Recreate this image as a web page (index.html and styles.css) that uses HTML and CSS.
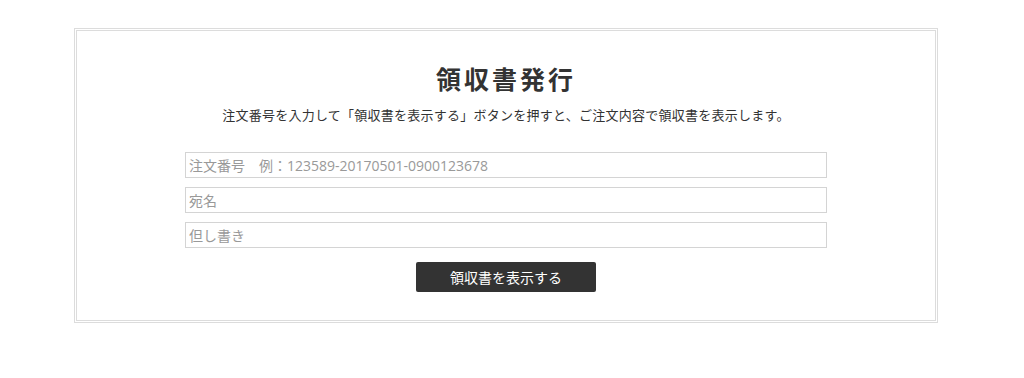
FILE: index.html
```html
<!DOCTYPE html>
<html lang="ja">
<head>
    <meta charset="UTF-8">
    <meta name="viewport" content="width=device-width, initial-scale=1.0">
    <title>領収書発行</title>
    <link rel="stylesheet" href="styles.css">
</head>
<body>
    <section class="receipt">
        <h1 class="receipt-title">領収書発行</h1>
        <p class="receipt-lead">注文番号を入力して「領収書を表示する」ボタンを押すと、ご注文内容で領収書を表示します。</p>
        <form class="receipt-form" onsubmit="event.preventDefault()">
            <input type="text" class="field" placeholder="注文番号　例：123589-20170501-0900123678">
            <input type="text" class="field" placeholder="宛名">
            <input type="text" class="field" placeholder="但し書き">
            <button type="submit" class="btn">領収書を表示する</button>
        </form>
    </section>
</body>
</html>
```

FILE: styles.css
```css
*{
    margin: 0;
    padding: 0;
    box-sizing: border-box;
    font-family: "Open Sans", "Noto Sans CJK JP", sans-serif;
}
body{
    background-color: #fff;
    color: #333;
}
.receipt{
    width: 864px;
    height: 295px;
    margin: 28px 0 0 74px;
    border: 3px double #dcdcdc;
    padding-top: 30px;
    text-align: center;
}
.receipt-title{
    font-size: 25px;
    font-weight: bold;
    letter-spacing: 3px;
    line-height: 36px;
    color: #333;
}
.receipt-lead{
    font-size: 13px;
    letter-spacing: 0.25px;
    line-height: 20px;
    margin-top: 8px;
    color: #333;
}
.receipt-form{
    width: 642px;
    margin: 27px auto 0;
    display: flex;
    flex-direction: column;
    align-items: center;
    gap: 9px;
}
.field{
    width: 100%;
    height: 26px;
    border: 1px solid #d4d4d4;
    padding: 0 3px;
    font-size: 14px;
    color: #333;
    outline: none;
}
.field::placeholder{
    color: #999;
}
.btn{
    margin-top: 5px;
    width: 180px;
    height: 30px;
    background-color: #333;
    color: #fff;
    border: 0;
    border-radius: 2px;
    font-size: 14px;
    cursor: pointer;
}
```
